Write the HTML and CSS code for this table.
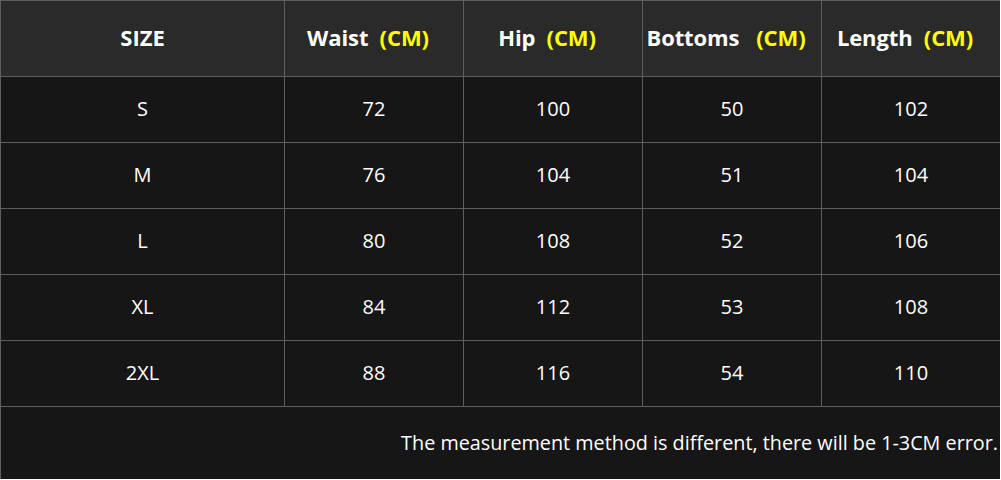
FILE: index.html
```html
<!DOCTYPE html>
<html>
<head>
<meta charset="utf-8">
<link rel="stylesheet" href="styles.css">
</head>
<body>
<div class="chart">
  <div class="cell head">SIZE</div>
  <div class="cell head measure">Waist&nbsp;&nbsp;<span class="unit">(CM)</span></div>
  <div class="cell head measure">Hip&nbsp;&nbsp;<span class="unit">(CM)</span></div>
  <div class="cell head measure">Bottoms&nbsp;&nbsp;&nbsp;<span class="unit">(CM)</span></div>
  <div class="cell head measure">Length&nbsp;&nbsp;<span class="unit">(CM)</span></div>

  <div class="cell">S</div><div class="cell">72</div><div class="cell">100</div><div class="cell">50</div><div class="cell">102</div>
  <div class="cell">M</div><div class="cell">76</div><div class="cell">104</div><div class="cell">51</div><div class="cell">104</div>
  <div class="cell">L</div><div class="cell">80</div><div class="cell">108</div><div class="cell">52</div><div class="cell">106</div>
  <div class="cell">XL</div><div class="cell">84</div><div class="cell">112</div><div class="cell">53</div><div class="cell">108</div>
  <div class="cell">2XL</div><div class="cell">88</div><div class="cell">116</div><div class="cell">54</div><div class="cell">110</div>

  <div class="cell note">The measurement method is different, there will be 1-3CM error.</div>
</div>
</body>
</html>
```
FILE: styles.css
```css
html, body {
  margin: 0;
  padding: 0;
  background: #ffffff;
}
.chart {
  width: 1000px;
  box-sizing: border-box;
  display: grid;
  grid-template-columns: 283px repeat(4, 178px);
  grid-template-rows: 75px repeat(5, 65px) 72px;
  gap: 1px;
  padding: 1px 0 0 1px;
  background: #5e5e5e;
  font-family: "Open Sans", "Noto Sans", sans-serif;
  font-size: 20px;
  color: #ffffff;
}
.cell {
  background: #161616;
  display: flex;
  align-items: center;
  justify-content: center;
  white-space: nowrap;
  padding-bottom: 2px;
  box-sizing: border-box;
}
.head {
  background: #2a2a2a;
  font-weight: 700;
  font-size: 22px;
  padding-bottom: 3px;
}
.measure {
  padding-right: 12px;
  letter-spacing: -0.1px;
}
.unit {
  color: #ffff00;
}
.note {
  grid-column: 1 / -1;
  justify-content: flex-end;
  padding-right: 2px;
  font-size: 19.8px;
}
```
